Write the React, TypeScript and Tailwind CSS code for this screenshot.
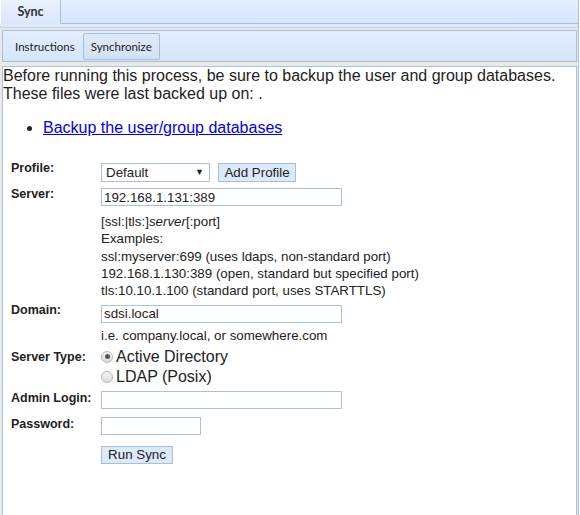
import * as React from "react";

const helpLines = [
  "Examples:",
  "ssl:myserver:699 (uses ldaps, non-standard port)",
  "192.168.1.130:389 (open, standard but specified port)",
  "tls:10.10.1.100 (standard port, uses STARTTLS)",
];

function Label({ children, className = "" }: { children: React.ReactNode; className?: string }) {
  return (
    <div className={`w-[98px] shrink-0 pl-[8px] text-[12.5px] leading-[15px] font-bold text-[#222] ${className}`}>
      {children}
    </div>
  );
}

function TextBox({ value = "", width = "w-[241px]" }: { value?: string; width?: string }) {
  return (
    <input
      readOnly
      value={value}
      className={`block ${width} h-[18px] border border-[#a9c1da] bg-white px-[2px] text-[13.33px] leading-[16px] text-[#222] outline-none`}
    />
  );
}

function Radio({ checked, label }: { checked?: boolean; label: string }) {
  return (
    <div className="flex h-[20px] items-center text-[16px] leading-[20px] text-[#222]">
      <span className="mr-[3px] flex h-[12px] w-[12px] items-center justify-center rounded-full border border-[#b5b5b5] bg-gradient-to-b from-[#f4f4f4] to-[#dcdcdc]">
        {checked && <span className="h-[5px] w-[5px] rounded-full bg-[#555]" />}
      </span>
      {label}
    </div>
  );
}

export default function App() {
  return (
    <div className="flex h-[515px] w-[579px] flex-col overflow-hidden border-r border-[#a5bfd8] bg-white font-['Liberation_Sans',Arial,sans-serif]">
      {/* tab strip */}
      <div className="flex h-[24px] shrink-0 bg-gradient-to-b from-[#e4effd] to-[#d4e5fb] font-['Lato','Noto_Sans',sans-serif]">
        <div className="flex w-[61px] items-center justify-center border-l border-r border-l-white border-r-[#a5bfd8] bg-gradient-to-b from-[#e8f1fd] to-[#dae8fb] text-[12.5px] font-bold text-[#333]">
          Sync
        </div>
        <div className="flex-1 border-b border-[#a5bfd8]" />
      </div>
      <div className="h-[4px] shrink-0 border-b border-[#c3d4e8] bg-[#dde9fa]" />

      {/* panel body */}
      <div className="flex flex-1 flex-col bg-[#e9e9e9] pl-[2px] pr-[1px] pt-[2px]">
        {/* toolbar */}
        <div className="flex h-[32px] shrink-0 border border-[#a5bfd8] bg-gradient-to-b from-[#e3eefd] to-[#d4e5fb] pl-[4px] pt-[2px] font-['Lato','Noto_Sans',sans-serif] text-[11.5px] text-[#222]">
          <button className="h-[27px] border border-transparent px-[7px]">Instructions</button>
          <button className="h-[27px] rounded-[2px] border border-[#a5bfd8] bg-gradient-to-b from-[#dde9f9] to-[#d2e2f6] px-[7px]">
            Synchronize
          </button>
        </div>

        {/* content */}
        <div className="mt-[4px] flex-1 border border-b-0 border-[#a9c1da] bg-white text-[#222]">
          <p className="text-[16px] leading-[18px]">
            Before running this process, be sure to backup the user and group databases.
            <br />
            These files were last backed up on: .
          </p>
          <ul className="mt-[16px] list-disc pl-[40px] text-[16px] leading-[18px]">
            <li>
              <a href="#" className="text-[#0000ee] underline">
                Backup the user/group databases
              </a>
            </li>
          </ul>

          <div className="mt-[24px]">
            {/* Profile */}
            <div className="flex">
              <Label>Profile:</Label>
              <div className="mt-[2px] flex gap-[8px] text-[13.33px]">
                <div className="flex h-[19px] w-[109px] items-center justify-between border border-[#a9c1da] bg-white pl-[4px] pr-[5px]">
                  <span>Default</span>
                  <span className="text-[9px]">▼</span>
                </div>
                <button className="h-[19px] w-[78px] border border-[#a6bfd9] bg-[#dbe9fb] text-[13.33px] leading-[16px]">
                  Add Profile
                </button>
              </div>
            </div>

            {/* Server */}
            <div className="mt-[5px] flex">
              <Label>Server:</Label>
              <div className="mt-[1px]">
                <TextBox value="192.168.1.131:389" />
                <div className="mt-[7px] text-[13.33px] leading-[17.25px] text-[#222]">
                  <div>
                    [ssl:|tls:]<i>server</i>[:port]
                  </div>
                  {helpLines.map((l) => (
                    <div key={l}>{l}</div>
                  ))}
                </div>
              </div>
            </div>

            {/* Domain */}
            <div className="mt-[4px] flex">
              <Label>Domain:</Label>
              <div className="mt-[1.5px]">
                <TextBox value="sdsi.local" />
                <div className="mt-[4px] text-[13.33px] leading-[17.25px]">i.e. company.local, or somewhere.com</div>
              </div>
            </div>

            {/* Server type */}
            <div className="mt-[2.75px] flex">
              <Label className="mt-[3.5px]">Server Type:</Label>
              <div>
                <Radio checked label="Active Directory" />
                <Radio label="LDAP (Posix)" />
              </div>
            </div>

            {/* Admin login */}
            <div className="mt-[4px] flex">
              <Label>Admin Login:</Label>
              <TextBox />
            </div>

            {/* Password */}
            <div className="mt-[8px] flex">
              <Label>Password:</Label>
              <TextBox width="w-[100px]" />
            </div>

            <div className="mt-[11px] flex">
              <div className="w-[98px] shrink-0" />
              <button className="h-[18px] w-[72px] border border-[#a6bfd9] bg-[#dbe9fb] text-[13.33px] leading-[16px]">
                Run Sync
              </button>
            </div>
          </div>
        </div>
      </div>
    </div>
  );
}
